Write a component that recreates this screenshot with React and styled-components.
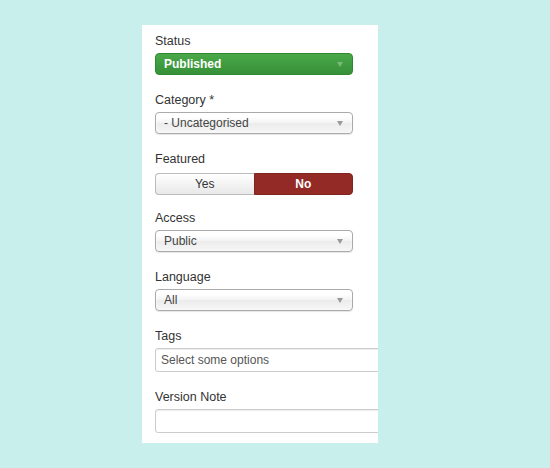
import React from 'react'
import styled, { createGlobalStyle } from 'styled-components'

const GlobalStyle = createGlobalStyle`
  html, body {
    margin: 0;
    padding: 0;
    background: #c9efec;
  }
  body {
    font-family: "Liberation Sans", Arial, sans-serif;
    font-size: 13px;
    color: #333;
  }
`

const App = () => {
  return (
    <>
      <GlobalStyle />
      <Page>
        <Panel>
          <Group>
            <Label>Status</Label>
            <Select $tone="success">
              <span>Published</span>
              <Arrow $light />
            </Select>
          </Group>

          <Group>
            <Label>Category *</Label>
            <Select>
              <span>- Uncategorised</span>
              <Arrow />
            </Select>
          </Group>

          <Group $gap={14}>
            <Label>Featured</Label>
            <Toggle>
              <ToggleButton>Yes</ToggleButton>
              <ToggleButton $active>No</ToggleButton>
            </Toggle>
          </Group>

          <Group>
            <Label>Access</Label>
            <Select>
              <span>Public</span>
              <Arrow />
            </Select>
          </Group>

          <Group>
            <Label>Language</Label>
            <Select>
              <span>All</span>
              <Arrow />
            </Select>
          </Group>

          <Group>
            <Label>Tags</Label>
            <TextBox>Select some options</TextBox>
          </Group>

          <Group $gap={0}>
            <Label>Version Note</Label>
            <TextBox />
          </Group>
        </Panel>
      </Page>
    </>
  )
}

export default App


const Page = styled.div`
  width: 550px;
  height: 468px;
  padding: 25px 0 0 142px;
  box-sizing: border-box;
`

const Panel = styled.div`
  width: 236px;
  height: 418px;
  box-sizing: border-box;
  background: #fff;
  padding: 7px 0 0 13px;
  overflow: hidden;
  display: flex;
  flex-direction: column;
`

const Group = styled.div`
  display: flex;
  flex-direction: column;
  margin-bottom: ${p => (p.$gap ?? 16)}px;
`

const Label = styled.div`
  font-size: 12.5px;
  line-height: 18px;
  margin-bottom: 3px;
  color: #333;
`

const Select = styled.div`
  width: 198px;
  height: 22px;
  box-sizing: border-box;
  border-radius: 4px;
  padding: 0 8px;
  font-size: 12px;
  display: flex;
  align-items: center;
  justify-content: space-between;
  ${p =>
    p.$tone === 'success'
      ? `
    background: linear-gradient(#4aa84a, #379037);
    border: 1px solid #2f8a2f;
    color: #fff;
    font-weight: bold;
  `
      : `
    background: linear-gradient(#fff 20%, #f3f3f3 50%, #ececec 52%, #f6f6f6);
    border: 1px solid #aaa;
    color: #444;
    box-shadow: inset 0 0 3px #fff, 0 1px 1px rgba(0,0,0,0.1);
  `}
`

const Arrow = styled.i`
  width: 0;
  height: 0;
  border-left: 3px solid transparent;
  border-right: 3px solid transparent;
  border-top: 5px solid ${p => (p.$light ? 'rgba(255,255,255,0.3)' : '#999')};
  margin-right: 1px;
`

const Toggle = styled.div`
  display: flex;
  width: 198px;
  height: 22px;
  margin-top: 2px;
  font-size: 12px;
`

const ToggleButton = styled.div`
  flex: 1;
  display: flex;
  align-items: center;
  justify-content: center;
  box-sizing: border-box;
  ${p =>
    p.$active
      ? `
    background: #942a25;
    color: #fff;
    font-weight: bold;
    border: 1px solid #7f231f;
    border-radius: 0 4px 4px 0;
  `
      : `
    background: linear-gradient(#fff, #e8e8e8);
    color: #333;
    border: 1px solid #bbb;
    border-right: none;
    border-radius: 4px 0 0 4px;
  `}
`

const TextBox = styled.div`
  width: 240px;
  height: 24px;
  box-sizing: border-box;
  border: 1px solid #ccc;
  border-radius: 3px;
  padding: 0 5px;
  font-size: 12px;
  display: flex;
  align-items: center;
  color: #555;
  box-shadow: inset 0 1px 1px rgba(0,0,0,0.075);
`
